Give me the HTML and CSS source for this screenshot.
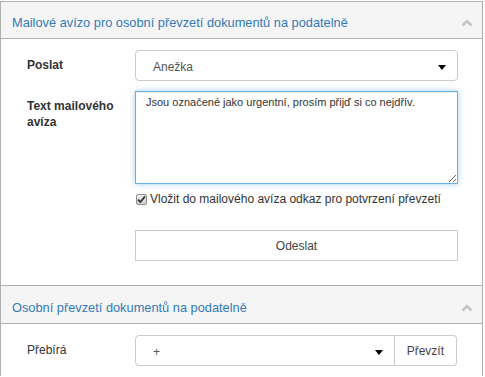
FILE: index.html
```html
<!DOCTYPE html>
<html lang="cs">
<head>
    <meta charset="UTF-8">
    <title>Převzetí dokumentů</title>
    <link rel="stylesheet" href="styles.css">
</head>
<body>
    <div class="panel">
        <div class="panel-heading">
            <span class="panel-title">Mailové avízo pro osobní převzetí dokumentů na podatelně</span>
            <svg class="chevron" width="12" height="8" viewBox="0 0 12 8"><path d="M1.5 6.5 L6 2 L10.5 6.5" fill="none" stroke="#c4c4c4" stroke-width="2.6"/></svg>
        </div>
        <div class="panel-body first">
            <div class="form-row">
                <label class="label">Poslat</label>
                <div class="select">Anežka<span class="caret"></span></div>
            </div>
            <div class="form-row">
                <label class="label">Text mailového avíza</label>
                <textarea class="textarea">Jsou označené jako urgentní, prosím přijď si co nejdřív.</textarea>
            </div>
            <div class="form-row">
                <span></span>
                <div class="check-row">
                    <span class="checkbox"><svg width="9" height="9" viewBox="0 0 9 9"><path d="M1 4.6 L3.4 7 L8 1.4" fill="none" stroke="#333" stroke-width="1.8"/></svg></span>
                    Vložit do mailového avíza odkaz pro potvrzení převzetí
                </div>
            </div>
            <div class="form-row">
                <span></span>
                <button class="btn btn-block">Odeslat</button>
            </div>
        </div>

        <div class="panel-heading second">
            <span class="panel-title">Osobní převzetí dokumentů na podatelně</span>
            <svg class="chevron" width="12" height="8" viewBox="0 0 12 8"><path d="M1.5 6.5 L6 2 L10.5 6.5" fill="none" stroke="#c4c4c4" stroke-width="2.6"/></svg>
        </div>
        <div class="panel-body">
            <div class="form-row">
                <label class="label normal">Přebírá</label>
                <div class="input-group">
                    <div class="select grouped">+<span class="caret"></span></div>
                    <button class="btn btn-addon">Převzít</button>
                </div>
            </div>
        </div>
    </div>
</body>
</html>
```

FILE: styles.css
```css
body {
    margin: 0;
    padding-top: 1px;
    background: #fff;
    font-family: "Liberation Sans", Arial, sans-serif;
    font-size: 12px;
    color: #333;
}

.panel {
    width: 481px;
    border: 1px solid #b0b0b0;
    border-bottom: none;
}

.panel-heading {
    display: flex;
    justify-content: space-between;
    align-items: center;
    height: 37px;
    box-sizing: border-box;
    padding: 0 9px 0 11px;
    background: #f5f5f5;
    border-bottom: 1px solid #b0b0b0;
    font-size: 12.8px;
    line-height: 17px;
}

.panel-heading.second {
    border-top: 1px solid #b0b0b0;
    height: 39px;
}

.panel-title {
    color: #337ab7;
    padding-top: 5px;
}

.chevron {
    margin-top: 6px;
}

.panel-body {
    padding: 11px 25px 10px 26px;
}

.panel-body.first {
    padding: 11px 25px 24px 26px;
}

.form-row {
    display: grid;
    grid-template-columns: 108px 323px;
    margin-bottom: 10px;
}

.form-row:last-child {
    margin-bottom: 0;
}

.label {
    font-weight: bold;
    line-height: 16px;
    padding-top: 7px;
    padding-right: 10px;
}

.label.normal {
    font-weight: normal;
}

.select {
    position: relative;
    height: 31px;
    box-sizing: border-box;
    border: 1px solid #ccc;
    border-radius: 4px;
    padding: 8px 17px 0;
    line-height: 17px;
    color: #555;
}

.caret {
    position: absolute;
    right: 11px;
    top: 14px;
    border-top: 5px solid #000;
    border-left: 4px solid transparent;
    border-right: 4px solid transparent;
}

.textarea {
    display: block;
    width: 323px;
    height: 93px;
    box-sizing: border-box;
    margin: 0;
    padding: 3px 10px;
    border: 1px solid #66afe9;
    border-radius: 0;
    outline: none;
    box-shadow: inset 0 1px 1px rgba(0, 0, 0, 0.075), 0 0 6px rgba(102, 175, 233, 0.6);
    font-family: "Liberation Sans", Arial, sans-serif;
    font-size: 11px;
    line-height: 15px;
    color: #333;
    resize: vertical;
}

.check-row {
    display: flex;
    align-items: center;
    gap: 3px;
    margin-top: -4px;
    line-height: 18px;
    margin-bottom: 12px;
    font-size: 12px;
}

.checkbox {
    display: flex;
    align-items: center;
    justify-content: center;
    width: 11px;
    height: 11px;
    box-sizing: border-box;
    border: 1px solid #8f8f8f;
    border-radius: 2px;
    background: linear-gradient(#f0f0f0, #cfcfcf);
    margin-left: 1px;
}

.btn {
    height: 31px;
    box-sizing: border-box;
    border: 1px solid #ccc;
    background: #fff;
    font-family: "Liberation Sans", Arial, sans-serif;
    font-size: 12px;
    color: #444;
    padding: 0 12px;
}

.btn-block {
    width: 323px;
    border-radius: 0;
}

.input-group {
    display: flex;
}

.select.grouped {
    flex: 1;
    border-radius: 4px 0 0 4px;
}

.btn-addon {
    border-left: none;
    border-radius: 0 4px 4px 0;
    margin-right: 1px;
}
```
